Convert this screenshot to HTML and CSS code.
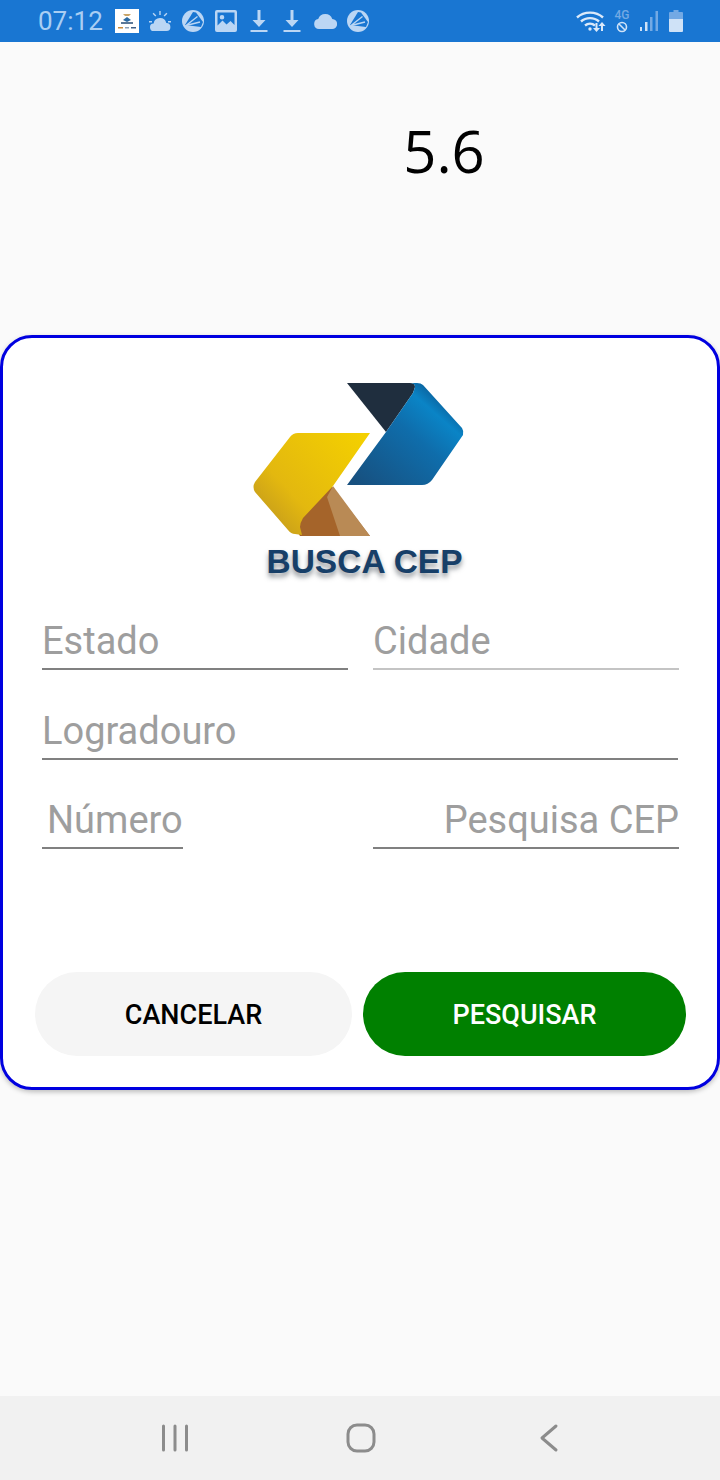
FILE: index.html
```html
<!DOCTYPE html>
<html lang="pt-BR">
<head>
    <meta charset="UTF-8">
    <meta name="viewport" content="width=device-width, initial-scale=1.0">
    <title>Busca CEP</title>
    <link rel="stylesheet" href="styles.css">
</head>
<body>

    <!-- Status Bar -->
    <header class="status-bar">
        <span class="clock">07:12</span>
        <div class="status-left">
            <svg class="app-thumb" viewBox="0 0 24 24"><rect width="24" height="24" fill="#fff"/><path d="M8 5h8l-2 2h-4z" fill="#c9a468"/><path d="M8 11l4-3 4 3-4 2z" fill="#2b6aa3"/><path d="M6 13h12v2H6z" fill="#5b7898"/><path d="M3 18h5v1.500H3z" fill="#c98a3a"/><path d="M10 18h4v1.500h-4z" fill="#8aa0b8"/><path d="M16 18h5v1.500h-5z" fill="#3f5f86"/></svg>
            <svg class="status-icon" viewBox="0 0 24 24"><path d="M6 22a3.800 3.800 0 0 1-.4-7.600 6.500 6.500 0 0 1 12.700-.4 4 4 0 0 1 .2 8z"/><path d="M11.300 2h1.400v4h-1.400zM4.600 4.700l1-1 2.700 2.800-1 1zM18.400 3.700l1 1-2.800 2.800-1-1zM1 12h3v1.400H1zM20 12h3v1.400h-3z"/></svg>
            <svg class="status-icon" viewBox="0 0 24 24"><circle cx="12" cy="12" r="11"/><path class="cut" d="M4 16L12 3l3 .5 7 9.500-2 5z"/><path class="spoke" d="M5 16.500L16.500 7.500M5 16.500l14-3.500"/></svg>
            <svg class="status-icon" viewBox="0 0 24 24"><path fill-rule="evenodd" d="M3 1h18a2 2 0 0 1 2 2v18a2 2 0 0 1-2 2H3a2 2 0 0 1-2-2V3a2 2 0 0 1 2-2zm.5 2.500v13l5-5 4 4 4-3.500 4 4V3.500zM8 6a2.300 2.300 0 1 1 0 4.600A2.300 2.300 0 0 1 8 6z"/></svg>
            <svg class="status-icon" viewBox="0 0 24 24"><path d="M10.500 1h3v10h5L12 18 5.500 11h5zM3.500 21h17v2h-17z"/></svg>
            <svg class="status-icon" viewBox="0 0 24 24"><path d="M10.500 1h3v10h5L12 18 5.500 11h5zM3.500 21h17v2h-17z"/></svg>
            <svg class="status-icon" viewBox="0 0 24 24"><path d="M6 20a5 5 0 0 1-.8-9.900A7.500 7.500 0 0 1 19.300 10 5 5 0 0 1 19 20z"/></svg>
            <svg class="status-icon" viewBox="0 0 24 24"><circle cx="12" cy="12" r="11"/><path class="cut" d="M4 16L12 3l3 .5 7 9.500-2 5z"/><path class="spoke" d="M5 16.500L16.500 7.500M5 16.500l14-3.500"/></svg>
        </div>
        <div class="status-right">
            <svg class="wifi" viewBox="0 0 30 24"><path class="line" d="M1 8.500C8 2 20 2 27 8.500M5 12.500c5-4.500 13-4.500 18 0M9 16.500c3-2.500 7-2.500 10 0"/><circle cx="14" cy="20" r="1.700" class="dot"/><path class="dot" d="M19.500 14h2v5H24l-3.500 4-3.500-4h2.500zM26 13l3.500 4H27v5h-2v-5h-2.500z"/></svg>
            <div class="net">
                <span class="net-label">4G</span>
                <svg class="net-off" viewBox="0 0 12 12"><circle cx="6" cy="6" r="4.500"/><path d="M3 3l6 6"/></svg>
            </div>
            <svg class="signal" viewBox="0 0 20 24"><path class="bar-on" d="M1 18h2v4H1z"/><path class="bar-on" d="M6 13h2.500v9H6z"/><path class="bar-off" d="M11 8h2.500v14H11zM16.500 2H19v20h-2.500z"/></svg>
            <svg class="battery" viewBox="0 0 14 24"><path class="bar-off" d="M4.500 1h5v2H13a1 1 0 0 1 1 1v6H0V4a1 1 0 0 1 1-1h3.500z"/><path class="bar-on" d="M0 10h14v12a1 1 0 0 1-1 1H1a1 1 0 0 1-1-1z"/></svg>
        </div>
    </header>

    <!-- Version -->
    <section class="version">5.6</section>

    <!-- Search Card -->
    <main class="card">
        <div class="logo">
            <svg class="logo-mark" viewBox="0 0 240 170">
                <defs>
                    <linearGradient id="blueFill" x1="0.1" y1="1" x2="0.9" y2="0.2">
                        <stop offset="0" stop-color="#17507f"/>
                        <stop offset="0.6" stop-color="#0f6dab"/>
                        <stop offset="0.85" stop-color="#0a84c6"/>
                        <stop offset="1" stop-color="#0b5c96"/>
                    </linearGradient>
                    <linearGradient id="yellowFill" x1="0" y1="0.9" x2="1" y2="0.1">
                        <stop offset="0" stop-color="#bd9420"/>
                        <stop offset="0.35" stop-color="#e3b80f"/>
                        <stop offset="1" stop-color="#f4d000"/>
                    </linearGradient>
                </defs>
                <path d="M107 13h63q5 0 5 4l-2 6-27 39z" fill="#1f2e3e"/>
                <path d="M146 62l27-39 2-6q0-4-5-4h7q4 0 6 2l39 43q2 3 1 7l-31 45q-4 5-10 5h-75z" fill="url(#blueFill)"/>
                <path d="M90 114l40 52H60l-6-10z" fill="#a5642a"/>
                <path d="M93 116l37 50h-30l-13-39z" fill="#b98a55"/>
                <path d="M130 63H58q-5 0-8 4L15 112q-3 5 0 10l33 38q3 4 7 4l7 1-2-8q0-4 3-9l30-32z" fill="url(#yellowFill)"/>
            </svg>
            <span class="logo-name">BUSCA CEP</span>
        </div>

        <form class="form">
            <div class="form-row">
                <div class="field field-half">Estado</div>
                <div class="field field-half field-light">Cidade</div>
            </div>
            <div class="form-row">
                <div class="field field-full">Logradouro</div>
            </div>
            <div class="form-row form-row-last">
                <div class="field field-number">Número</div>
                <div class="field field-half field-right">Pesquisa CEP</div>
            </div>
        </form>

        <div class="buttons">
            <button type="button" class="btn btn-cancel">CANCELAR</button>
            <button type="button" class="btn btn-search">PESQUISAR</button>
        </div>
    </main>

    <!-- Navigation Bar -->
    <nav class="nav-bar">
        <svg class="nav-icon" viewBox="0 0 30 30"><path d="M3.500 3v24M15 3v24M26.500 3v24"/></svg>
        <svg class="nav-icon" viewBox="0 0 30 30"><rect x="2" y="2" width="26" height="26" rx="9"/></svg>
        <svg class="nav-icon nav-back" viewBox="0 0 30 30"><path d="M22 3L8 15l14 12"/></svg>
    </nav>

</body>
</html>
```

FILE: styles.css
```css
/* General Styles */
body {
    font-family: Roboto, sans-serif;
    margin: 0;
    padding: 0;
    width: 720px;
    height: 1480px;
    overflow: hidden;
    display: flex;
    flex-direction: column;
    background-color: #fafafa;
}

/* Status Bar */
.status-bar {
    height: 42px;
    flex-shrink: 0;
    display: flex;
    align-items: center;
    padding-left: 38px;
    background-color: #1976d2;
    color: #a9cef3;
}

.clock {
    font-size: 26px;
    width: 77px;
}

.status-left {
    display: flex;
    gap: 9px;
}

.status-left svg {
    width: 24px;
    height: 24px;
}

.status-icon {
    fill: #bbd6f4;
}

.status-icon .cut {
    fill: #1976d2;
}

.status-icon .spoke {
    fill: none;
    stroke: #bbd6f4;
    stroke-width: 1.4;
}

.status-right {
    display: flex;
    align-items: center;
    margin-left: 206px;
}

.wifi {
    width: 30px;
    height: 24px;
}

.wifi .line {
    fill: none;
    stroke: #dbe9f9;
    stroke-width: 2.4;
}

.wifi .dot {
    fill: #dbe9f9;
}

.net {
    display: flex;
    flex-direction: column;
    align-items: center;
    width: 16px;
    margin-left: 8px;
}

.net-label {
    font-size: 12px;
    font-weight: 500;
    line-height: 11px;
    color: #73a9e4;
}

.net-off {
    width: 12px;
    height: 12px;
    fill: none;
    stroke: #cfe2f7;
    stroke-width: 1.6;
}

.signal {
    width: 20px;
    height: 24px;
    margin-left: 9px;
}

.battery {
    width: 14px;
    height: 24px;
    margin-left: 10px;
}

.bar-on {
    fill: #cfe2f7;
}

.bar-off {
    fill: #73a9e4;
}

/* Version */
.version {
    height: 293px;
    flex-shrink: 0;
    box-sizing: border-box;
    padding: 69px 0 0 168px;
    text-align: center;
    font-family: "Open Sans", sans-serif;
    font-size: 58px;
    line-height: 80px;
    color: #000;
}

/* Search Card */
.card {
    height: 755px;
    flex-shrink: 0;
    box-sizing: border-box;
    display: flex;
    flex-direction: column;
    background-color: #fff;
    border: 3px solid #0000e0;
    border-radius: 32px;
    box-shadow: 0 2px 5px rgba(0, 0, 0, 0.25);
}

/* Logo */
.logo {
    display: flex;
    flex-direction: column;
    align-items: center;
    height: 274px;
    padding-top: 32px;
    box-sizing: border-box;
}

.logo-mark {
    width: 240px;
    height: 170px;
    flex-shrink: 0;
}

.logo-name {
    font-family: "Liberation Sans", Arial, sans-serif;
    font-weight: 700;
    font-size: 33.5px;
    line-height: 36px;
    color: #173f68;
    text-shadow: 0 4px 5px rgba(40, 50, 60, 0.5);
    margin: 4px 0 0 9px;
}

/* Form */
.form {
    display: flex;
    flex-direction: column;
    gap: 32px;
    padding: 0 38px 0 39px;
}

.form-row {
    display: flex;
    justify-content: space-between;
}

.form-row-last {
    margin-top: -1px;
}

.field {
    box-sizing: border-box;
    height: 58px;
    border-bottom: 2px solid #808080;
    font-size: 38px;
    line-height: 58px;
    color: #9e9e9e;
}

.field-half {
    width: 306px;
}

.field-light {
    border-bottom-color: #c4c4c4;
}

.field-full {
    width: 636px;
}

.field-number {
    width: 141px;
    padding-left: 5px;
}

.field-right {
    text-align: right;
}

/* Buttons */
.buttons {
    display: flex;
    gap: 11px;
    margin-top: auto;
    padding: 0 0 31px 32px;
}

.btn {
    height: 84px;
    border: none;
    border-radius: 42px;
    font-family: Roboto, sans-serif;
    font-size: 27px;
    font-weight: 500;
    padding: 2px 0 0;
}

.btn-cancel {
    width: 317px;
    background-color: #f5f5f5;
    color: #000;
}

.btn-search {
    width: 323px;
    background-color: #008000;
    color: #fff;
}

/* Navigation Bar */
.nav-bar {
    height: 84px;
    flex-shrink: 0;
    margin-top: auto;
    box-sizing: border-box;
    padding-left: 4px;
    display: flex;
    align-items: center;
    justify-content: center;
    gap: 156px;
    background-color: #f1f1f1;
}

.nav-icon {
    width: 30px;
    height: 30px;
    fill: none;
    stroke: #8c8c8c;
    stroke-width: 3;
    stroke-linecap: round;
    stroke-linejoin: round;
}

.nav-back {
    margin-left: 2px;
}
```
